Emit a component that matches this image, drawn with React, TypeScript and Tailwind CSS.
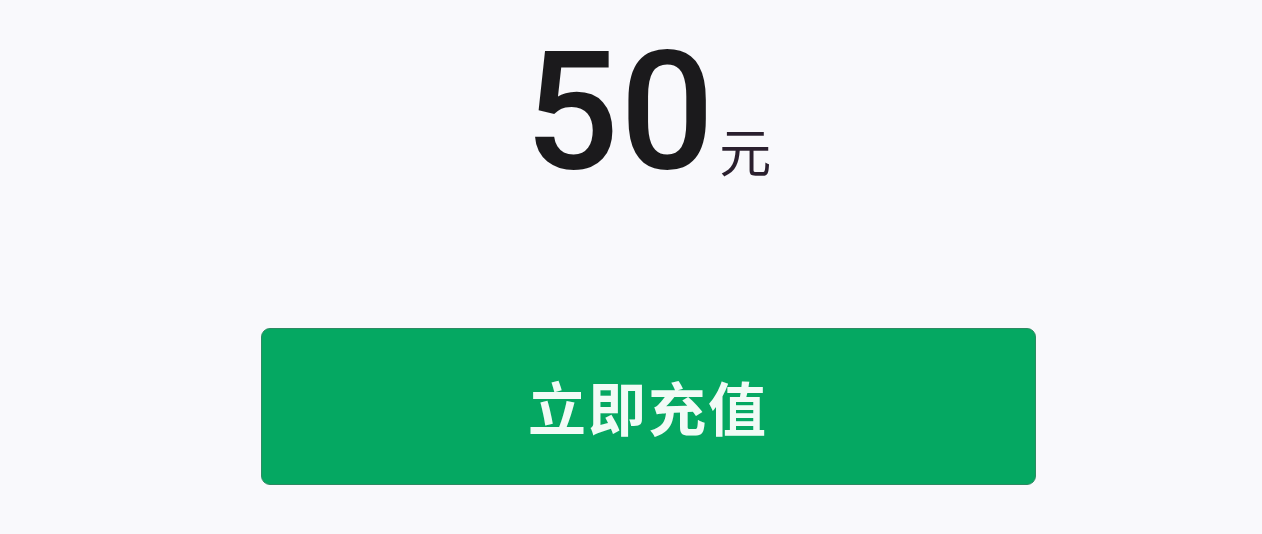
import React from 'react';

const App: React.FC = () => {
  return (
    <div
      className="w-[1262px] h-[534px] bg-[#f9f9fc] flex flex-col items-center pl-[34px] overflow-hidden"
      style={{ fontFamily: 'Roboto, "Noto Sans CJK SC", sans-serif' }}
    >
      {/* Amount */}
      <div className="flex items-end mt-[5px] h-[190px]">
        <span className="text-[166px] font-medium leading-none text-[#1b1a1c] tracking-[1px]">50</span>
        <span
          className="text-[52px] leading-none text-[#2a1f2e] ml-[4px] mb-[19px]"
          style={{ fontFamily: '"Noto Sans CJK SC", sans-serif' }}
        >
          元
        </span>
      </div>

      {/* Recharge button */}
      <button
        type="button"
        className="mt-[133px] w-[775px] h-[157px] rounded-[9px] bg-[#05a862] border border-[#2f8a63] flex items-center justify-center"
      >
        <span
          className="text-[58px] font-semibold text-[#f2fbf6] tracking-[2px]"
          style={{ fontFamily: '"Noto Sans CJK SC", sans-serif' }}
        >
          立即充值
        </span>
      </button>
    </div>
  );
};

export default App;
